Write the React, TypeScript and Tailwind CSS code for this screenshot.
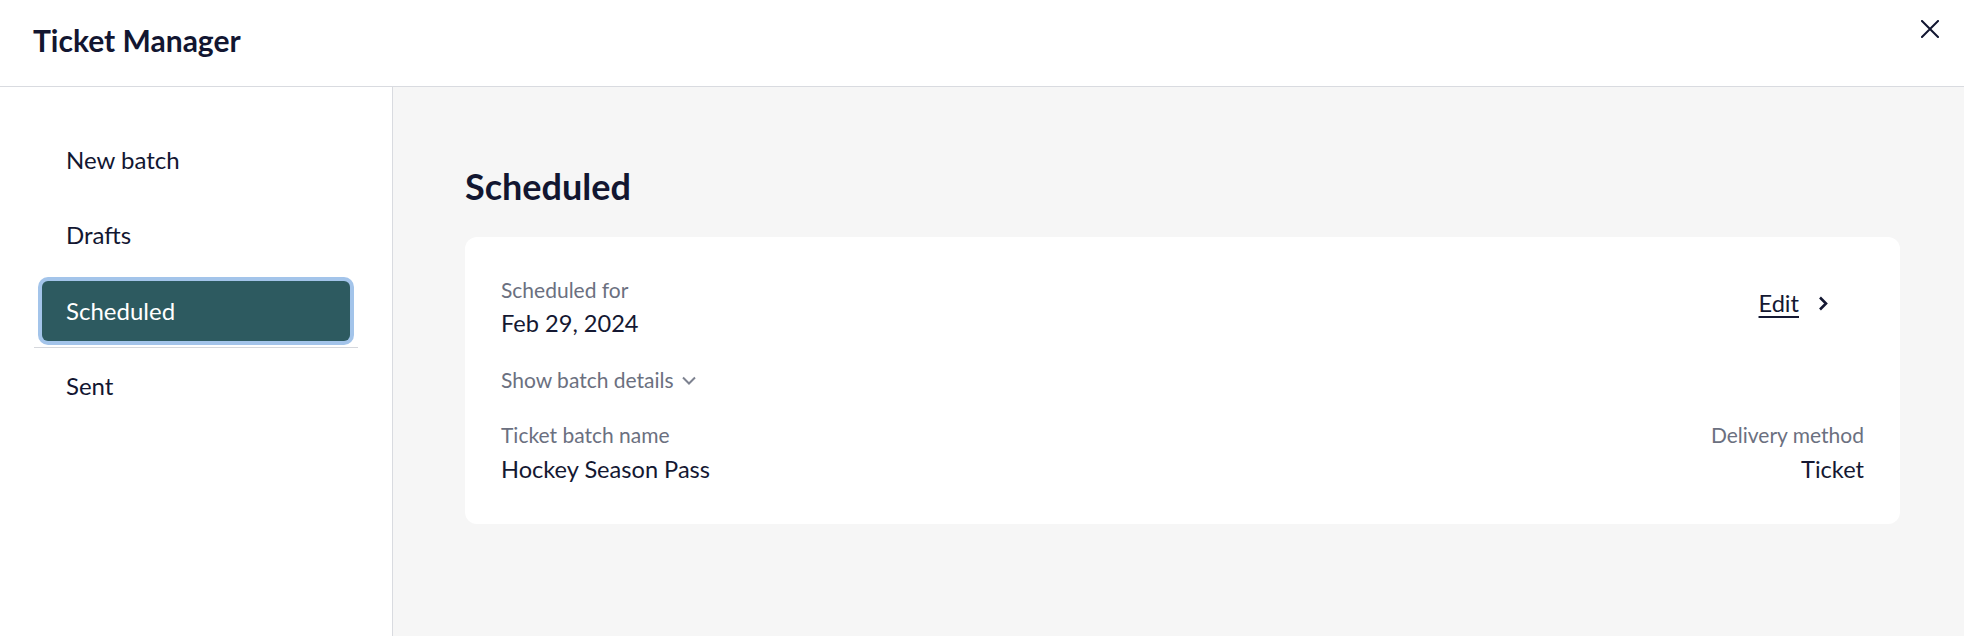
import React from "react";

const navItems = ["New batch", "Drafts", "Scheduled", "Sent"];

export default function App() {
  return (
    <div
      className="w-[1964px] h-[636px] flex flex-col bg-white text-[#141832] overflow-hidden"
      style={{ fontFamily: "Lato, 'Noto Sans', sans-serif" }}
    >
      <header className="h-[87px] shrink-0 border-b border-[#d9dbe0] flex justify-between items-start">
        <h1 className="pl-[33px] pt-[20px] text-[30px] leading-[40px] font-bold text-[#121631]">
          Ticket Manager
        </h1>
        <button className="mt-[20px] mr-[25px] w-[18px] h-[18px] text-[#121631]" aria-label="Close">
          <svg width="18" height="18" viewBox="0 0 18 18" fill="none">
            <path d="M1 1 L17 17 M17 1 L1 17" stroke="currentColor" strokeWidth="2" strokeLinecap="square" />
          </svg>
        </button>
      </header>

      <div className="flex flex-1 min-h-0">
        <aside className="w-[393px] shrink-0 border-r border-[#d9dbe0] pt-[35px] px-[34px]">
          <nav className="flex flex-col">
            {navItems.map((item) =>
              item === "Scheduled" ? (
                <div key={item} className="h-[76px] border-b border-[#d5d7dc]">
                  <div className="mt-[9px] mx-[8px] h-[60px] rounded-[6px] bg-[#2d5a60] ring-4 ring-[#a3c4ea] flex items-center px-[24px] text-[24px] text-white">
                    {item}
                  </div>
                </div>
              ) : (
                <div key={item} className="h-[75px] flex items-center px-[32px] text-[24px] text-[#121631]">
                  {item}
                </div>
              )
            )}
          </nav>
        </aside>

        <main className="flex-1 bg-[#f6f6f6] pl-[72px] pr-[64px] pt-[78px]">
          <h2 className="text-[36px] leading-[42px] font-bold text-[#121631]">Scheduled</h2>
          <section className="mt-[30px] bg-white rounded-[12px] px-[36px] pt-[41px] pb-[41px]">
            <div className="flex justify-between items-start">
              <div>
                <div className="text-[21px] leading-[24px] text-[#6b7080]">Scheduled for</div>
                <div className="mt-[7px] text-[23.6px] leading-[28px]">Feb 29, 2024</div>
              </div>
              <div className="mt-[11px] mr-[35px] flex items-center gap-[19px] text-[23.6px] leading-[28px]">
                <span className="underline underline-offset-[4px] decoration-[1.5px]">Edit</span>
                <svg width="11" height="15" viewBox="0 0 11 15" fill="none">
                  <path d="M2 1.5 L8 7.5 L2 13.5" stroke="#141832" strokeWidth="2.6" />
                </svg>
              </div>
            </div>
            <div className="mt-[31px] flex items-center gap-[8px] text-[21px] leading-[24px] text-[#6b7080]">
              <span>Show batch details</span>
              <svg width="14" height="9" viewBox="0 0 14 9" fill="none">
                <path d="M1 1.5 L7 7.5 L13 1.5" stroke="#7d8290" strokeWidth="2" />
              </svg>
            </div>
            <div className="mt-[31px] flex justify-between items-start">
              <div>
                <div className="text-[21px] leading-[24px] text-[#6b7080]">Ticket batch name</div>
                <div className="mt-[8px] text-[23.6px] leading-[28px]">Hockey Season Pass</div>
              </div>
              <div className="text-right">
                <div className="text-[21px] leading-[24px] text-[#6b7080]">Delivery method</div>
                <div className="mt-[8px] text-[23.6px] leading-[28px]">Ticket</div>
              </div>
            </div>
          </section>
        </main>
      </div>
    </div>
  );
}
